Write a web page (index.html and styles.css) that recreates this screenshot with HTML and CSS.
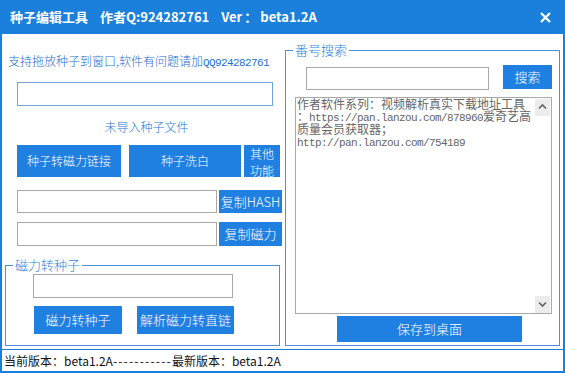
FILE: index.html
```html
<!DOCTYPE html>
<html>
<head>
<meta charset="utf-8">
<title>种子编辑工具</title>
<link rel="stylesheet" href="styles.css">
</head>
<body>
<div class="window">
	<div class="titlebar">
		<span class="title-name">种子编辑工具</span>
		<span class="title-seg">作者Q:924282761</span>
		<span class="title-seg">Ver<span class="colon">：</span>beta1.2A</span>
		<span class="close">
			<svg width="11" height="11" viewBox="0 0 11 11"><path d="M1 1L10 10M10 1L1 10" stroke="#fff" stroke-width="2.2" fill="none"/></svg>
		</span>
	</div>

	<div class="main">
		<div class="left">
			<div class="tip">支持拖放种子到窗口,软件有问题请加<span class="mono">QQ924282761</span></div>
			<input type="text" class="field field-torrent">
			<div class="notice">未导入种子文件</div>

			<div class="btn-row">
				<button class="btn btn-magnet">种子转磁力链接</button>
				<button class="btn btn-clean">种子洗白</button>
				<button class="btn btn-more">其他<br>功能</button>
			</div>

			<div class="copy-row row-hash">
				<input type="text" class="field field-copy">
				<button class="btn btn-copy">复制HASH</button>
			</div>
			<div class="copy-row row-link">
				<input type="text" class="field field-copy">
				<button class="btn btn-copy">复制磁力</button>
			</div>

			<fieldset class="group group-convert">
				<legend>磁力转种子</legend>
				<input type="text" class="field field-convert">
				<div class="convert-row">
					<button class="btn btn-tomagnet">磁力转种子</button>
					<button class="btn btn-direct">解析磁力转直链</button>
				</div>
			</fieldset>
		</div>

		<fieldset class="group group-search">
			<legend>番号搜索</legend>
			<div class="search-row">
				<input type="text" class="field field-search">
				<button class="btn btn-search">搜索</button>
			</div>
			<div class="memo">
				<div class="memo-text">
					<div class="memo-line">作者软件系列：视频解析真实下载地址工具</div>
					<div class="memo-line">：<span class="mono">https://pan.lanzou.com/878960</span>爱奇艺高</div>
					<div class="memo-line">质量会员获取器；</div>
					<div class="memo-line"><span class="mono">http://pan.lanzou.com/754189</span></div>
				</div>
				<div class="scroll">
					<span class="scroll-btn"><svg width="15" height="16" viewBox="0 0 15 16"><path d="M4 9.5L7.5 6L11 9.5" stroke="#666" stroke-width="1.7" fill="none"/></svg></span>
					<span class="scroll-btn"><svg width="15" height="16" viewBox="0 0 15 16"><path d="M4 6.5L7.5 10L11 6.5" stroke="#666" stroke-width="1.7" fill="none"/></svg></span>
				</div>
			</div>
			<button class="btn btn-save">保存到桌面</button>
		</fieldset>
	</div>

	<div class="statusbar">当前版本：beta1.2A<span class="dashes">-----------</span>最新版本：beta1.2A</div>
</div>
</body>
</html>
```

FILE: styles.css
```css
body {
	margin: 0;
	background: #fff;
	font-family: "Noto Sans CJK SC", "Noto Sans", sans-serif;
	font-size: 12px;
}

.window {
	width: 565px;
	height: 373px;
	background: #fff;
}

.titlebar {
	height: 34px;
	display: flex;
	align-items: center;
	padding-left: 10px;
	background: #1a80dc;
	color: #fff;
	font-size: 13px;
	font-weight: bold;
	line-height: 16px;
}

.title-seg {
	margin-left: 12px;
}

.colon {
	padding: 0 3px 0 2px;
}

.close {
	margin-left: auto;
	margin-right: 14px;
	display: flex;
}

.main {
	height: 315px;
	display: flex;
	align-items: flex-start;
	border-left: 2px solid #1a80dc;
	border-right: 2px solid #1a80dc;
}

.left {
	width: 283px;
	padding-top: 19px;
}

.mono {
	font-family: "Liberation Mono", monospace;
	font-size: 11px;
	letter-spacing: -0.6px;
	line-height: 1;
}

.tip {
	margin-left: 6px;
	line-height: 16px;
	color: #1c6fd4;
	font-weight: 300;
}

.field {
	display: block;
	box-sizing: border-box;
	margin: 0;
	padding: 0;
	border: 1px solid #a9a9a9;
	background: #fff;
}

.field-torrent {
	margin: 13px 0 0 15px;
	width: 256px;
	height: 24px;
	border-color: #6ea3dc;
}

.notice {
	margin: 13px 0 0 15px;
	width: 259px;
	line-height: 16px;
	text-align: center;
	color: #2478d8;
	font-weight: 300;
}

.btn {
	box-sizing: border-box;
	margin: 0;
	padding: 0;
	border: none;
	background: #1f80e2;
	color: #fff;
	font-family: "Noto Sans CJK SC", "Noto Sans", sans-serif;
	font-size: 12px;
	font-weight: 300;
	line-height: 16px;
}

.btn-row {
	display: flex;
	margin: 10px 0 0 15px;
	height: 32px;
}

.btn-magnet {
	width: 104px;
}

.btn-clean {
	width: 112px;
	margin-left: 8px;
}

.btn-more {
	width: 36px;
	margin-left: 3px;
	line-height: 17px;
}

.copy-row {
	display: flex;
	margin-left: 15px;
}

.row-hash {
	margin-top: 13px;
	height: 23px;
}

.row-link {
	margin-top: 9px;
	height: 24px;
}

.field-copy {
	width: 200px;
	height: 100%;
}

.btn-copy {
	width: 63px;
	margin-left: 2px;
	font-size: 13px;
}

.group {
	box-sizing: border-box;
	width: 275px;
	margin: 0;
	border: 1px solid #4a93dc;
	min-width: 0;
}

.group legend {
	margin-left: 7px;
	padding: 0 2px;
	font-size: 13px;
	font-weight: 300;
	line-height: 16px;
	color: #2e82dc;
}

.group-convert {
	margin: 11px 0 0 3px;
	padding: 1px 0 11px 0;
}

.field-convert {
	margin-left: 27px;
	width: 200px;
	height: 24px;
}

.convert-row {
	display: flex;
	margin: 8px 0 0 28px;
	height: 28px;
}

.btn-tomagnet {
	width: 88px;
	font-size: 13px;
}

.btn-direct {
	width: 97px;
	margin-left: 15px;
	font-size: 13px;
}

.group-search {
	margin-top: 8px;
	padding: 7px 0 3px 0;
}

.search-row {
	display: flex;
	align-items: flex-start;
	margin-left: 20px;
	height: 24px;
}

.field-search {
	margin-top: 2px;
	width: 183px;
	height: 23px;
}

.btn-search {
	width: 49px;
	height: 24px;
	margin-left: 14px;
	font-size: 13px;
}

.memo {
	display: flex;
	box-sizing: border-box;
	margin: 8px 0 0 9px;
	width: 257px;
	height: 217px;
	border: 1px solid #a9a9a9;
}

.memo-text {
	flex: 1;
	padding-left: 1px;
	color: #666;
}

.memo-line {
	height: 12.4px;
	line-height: 12.4px;
	white-space: nowrap;
}

.scroll {
	display: flex;
	flex-direction: column;
	justify-content: space-between;
	margin: 1px 1px 0 0;
}

.scroll-btn {
	display: flex;
	width: 15px;
	height: 17px;
	background: #ececec;
}

.btn-save {
	display: block;
	margin: 2px 0 0 51px;
	width: 185px;
	height: 26px;
	font-size: 13px;
}

.statusbar {
	height: 21px;
	padding-left: 2px;
	border: 2px solid #1a80dc;
	border-top: 1px solid #1a80dc;
	line-height: 21px;
	color: #111;
	font-size: 12px;
}

.dashes {
	letter-spacing: 1.2px;
}
```
